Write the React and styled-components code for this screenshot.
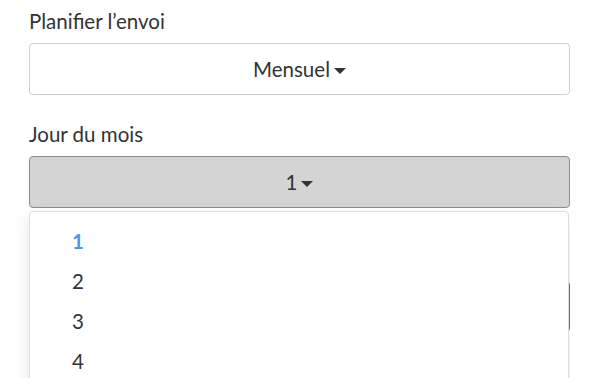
import React from 'react';
import styled, { createGlobalStyle } from 'styled-components';

const GlobalStyle = createGlobalStyle`
  body {
    margin: 0;
    background: #fff;
    font-family: Lato, "Open Sans", sans-serif;
    color: #333;
  }
`;

const Form = styled.div`
  position: relative;
  width: 570px;
  height: 378px;
  overflow: hidden;
  padding: 9px 0 0 29px;
  box-sizing: border-box;
`;

const Field = styled.div`
  margin-bottom: ${({ gap }) => gap || 0}px;
`;

const Label = styled.div`
  font-size: 20.5px;
  line-height: 24px;
  color: #333;
  margin-bottom: 10px;
`;

const Select = styled.div`
  height: 52px;
  box-sizing: border-box;
  border: 1px solid ${({ open }) => (open ? '#8c8c8c' : '#d0d0d0')};
  border-radius: 4px;
  background: ${({ open }) => (open ? '#d4d4d4' : '#fff')};
  display: flex;
  align-items: center;
  justify-content: center;
  font-size: 20.5px;
  color: #333;
`;

const Caret = styled.span`
  display: inline-block;
  width: 0;
  height: 0;
  margin-left: 4px;
  margin-top: 3px;
  border-left: 6px solid transparent;
  border-right: 6px solid transparent;
  border-top: 6px solid #333;
`;

/* button lying under the open menu, only its right edge shows */
const Behind = styled.div`
  position: absolute;
  left: 430px;
  top: 281px;
  width: 140px;
  height: 51px;
  box-sizing: border-box;
  border: 1px solid #4a78c0;
  border-radius: 4px;
  background: #5a88d0;
`;

const Menu = styled.ul`
  position: relative;
  list-style: none;
  width: 540px;
  box-sizing: border-box;
  margin: 3px 0 0;
  padding: 9px 0 0;
  background: #fff;
  border: 1px solid #dedede;
  border-radius: 4px;
  box-shadow: 0 6px 16px rgba(0, 0, 0, 0.1);
  height: 200px;
`;

const Item = styled.li`
  height: 40px;
  line-height: 40px;
  padding-left: 42px;
  font-size: 20.5px;
  color: ${({ active }) => (active ? '#5b8fe6' : '#333')};
  font-weight: ${({ active }) => (active ? 700 : 400)};
`;

const days = [1, 2, 3, 4];

export default function App() {
  return (
    <>
      <GlobalStyle />
      <Form>
        <Field gap={27}>
          <Label>Planifier l’envoi</Label>
          <Select>
            Mensuel
            <Caret />
          </Select>
        </Field>
        <Field>
          <Label>Jour du mois</Label>
          <Select open>
            1
            <Caret />
          </Select>
        </Field>
        <Behind />
        <Menu>
          {days.map((d) => (
            <Item key={d} active={d === 1}>
              {d}
            </Item>
          ))}
        </Menu>
      </Form>
    </>
  );
}
